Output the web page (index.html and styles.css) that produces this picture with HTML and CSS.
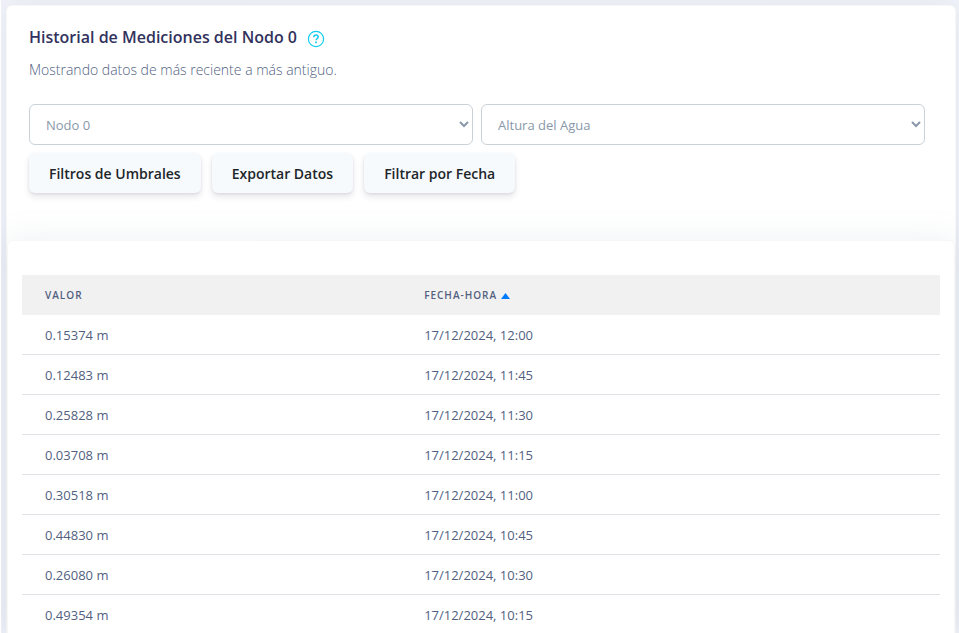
FILE: index.html
```
<!DOCTYPE html>
<html lang="es">
<head>
    <meta charset="UTF-8">
    <meta name="viewport" content="width=device-width, initial-scale=1">
    <title>Historial de Mediciones</title>
    <link rel="stylesheet" href="styles.css">
</head>
<body>
<div class="card">
    <!-- Cabecera -->
    <div class="card-header">
        <div class="title">
            <h3>Historial de Mediciones del Nodo 0</h3>
            <button type="button" class="btn-help" aria-label="Ayuda">
                <svg width="18" height="18" viewBox="0 0 18 18" fill="none" stroke="currentColor">
                    <circle cx="9" cy="9" r="7.6" stroke-width="1.2"/>
                    <path d="M6.8 7.2C6.8 5.8 7.7 5 9 5s2.2.8 2.2 1.9c0 1.6-2.1 1.7-2.1 3.4" stroke-width="1.5"/>
                    <path d="M8.2 12.4h1.7" stroke-width="1.6"/>
                </svg>
            </button>
        </div>
        <p class="subtitle">Mostrando datos de más reciente a más antiguo.</p>
        <div class="filters">
            <select class="form-control" aria-label="Nodo">
                <option>Nodo 0</option>
            </select>
            <select class="form-control" aria-label="Variable">
                <option>Altura del Agua</option>
            </select>
        </div>
        <div class="actions">
            <button type="button" class="btn">Filtros de Umbrales</button>
            <button type="button" class="btn">Exportar Datos</button>
            <button type="button" class="btn">Filtrar por Fecha</button>
        </div>
    </div>
    <!-- Tabla de mediciones -->
    <div class="card-table">
        <table class="table">
            <thead>
                <tr>
                    <th class="col-value">Valor</th>
                    <th>Fecha-Hora <svg width="9" height="6" viewBox="0 0 9 6"><path d="M4.5 0L9 6H0z" fill="#007bff"/></svg></th>
                </tr>
            </thead>
            <tbody>
                <tr><td>0.15374 m</td><td>17/12/2024, 12:00</td></tr>
                <tr><td>0.12483 m</td><td>17/12/2024, 11:45</td></tr>
                <tr><td>0.25828 m</td><td>17/12/2024, 11:30</td></tr>
                <tr><td>0.03708 m</td><td>17/12/2024, 11:15</td></tr>
                <tr><td>0.30518 m</td><td>17/12/2024, 11:00</td></tr>
                <tr><td>0.44830 m</td><td>17/12/2024, 10:45</td></tr>
                <tr><td>0.26080 m</td><td>17/12/2024, 10:30</td></tr>
                <tr><td>0.49354 m</td><td>17/12/2024, 10:15</td></tr>
            </tbody>
        </table>
    </div>
</div>
</body>
</html>
```

FILE: styles.css
```
*{
    box-sizing: border-box;
}
body{
    margin: 0;
    padding: 5px 3px 0 5px;
    border-left: 1px solid #fff;
    background-color: #f2f3fa;
    font-family: "Open Sans", sans-serif;
    font-size: 14px;
    line-height: 20px;
    color: #525f7f;
}
.card,
.card-table{
    border: 1px solid rgba(0, 0, 0, .03);
    border-bottom: 0;
    border-radius: 6px 6px 0 0;
    background-color: #fff;
    box-shadow: 0 0 32px rgba(136, 152, 170, .15);
}
.card-header{
    padding: 19px 30px 47px 22px;
}
.title{
    display: flex;
    align-items: center;
    gap: 10px;
}
.title h3{
    margin: 0;
    font-size: 16px;
    font-weight: 600;
    line-height: 24px;
    color: #32325d;
}
.btn-help{
    display: flex;
    margin: 3px 0 0;
    padding: 0;
    border: 0;
    background: none;
    color: #11cdef;
    cursor: pointer;
}
.subtitle{
    margin: 10px 0 23px;
    font-weight: 300;
    line-height: 22px;
}
.filters{
    display: flex;
    gap: 8px;
}
.form-control{
    flex: 1;
    min-width: 0;
    height: 41px;
    padding: 0 12px;
    border: 1px solid #cad1d7;
    border-radius: 6px;
    background-color: #fff;
    font-family: inherit;
    font-size: 13px;
    color: #8898aa;
}
.actions{
    display: flex;
    flex-wrap: wrap;
    gap: 11px;
    margin-top: 8px;
}
.btn{
    height: 40px;
    padding: 0 20px;
    border: 0;
    border-radius: 6px;
    background-color: #f7fafc;
    box-shadow: 0 4px 6px rgba(50, 50, 93, .11), 0 1px 3px rgba(0, 0, 0, .08);
    font-family: inherit;
    font-size: 14px;
    font-weight: 600;
    color: #212529;
    cursor: pointer;
}
.card-table{
    padding: 34px 14px 0;
}
.table{
    width: 100%;
    border-collapse: separate;
    border-spacing: 0;
    table-layout: fixed;
}
.table th,
.table td{
    padding: 0 23px;
    text-align: left;
}
.table th{
    height: 40px;
    background-color: #f1f1f1;
    font-size: 10px;
    font-weight: 600;
    letter-spacing: 1px;
    text-transform: uppercase;
}
.table .col-value{
    width: 41.3%;
}
.table td{
    height: 40px;
    border-bottom: 1px solid #dee2e6;
    font-size: 13px;
}
```
